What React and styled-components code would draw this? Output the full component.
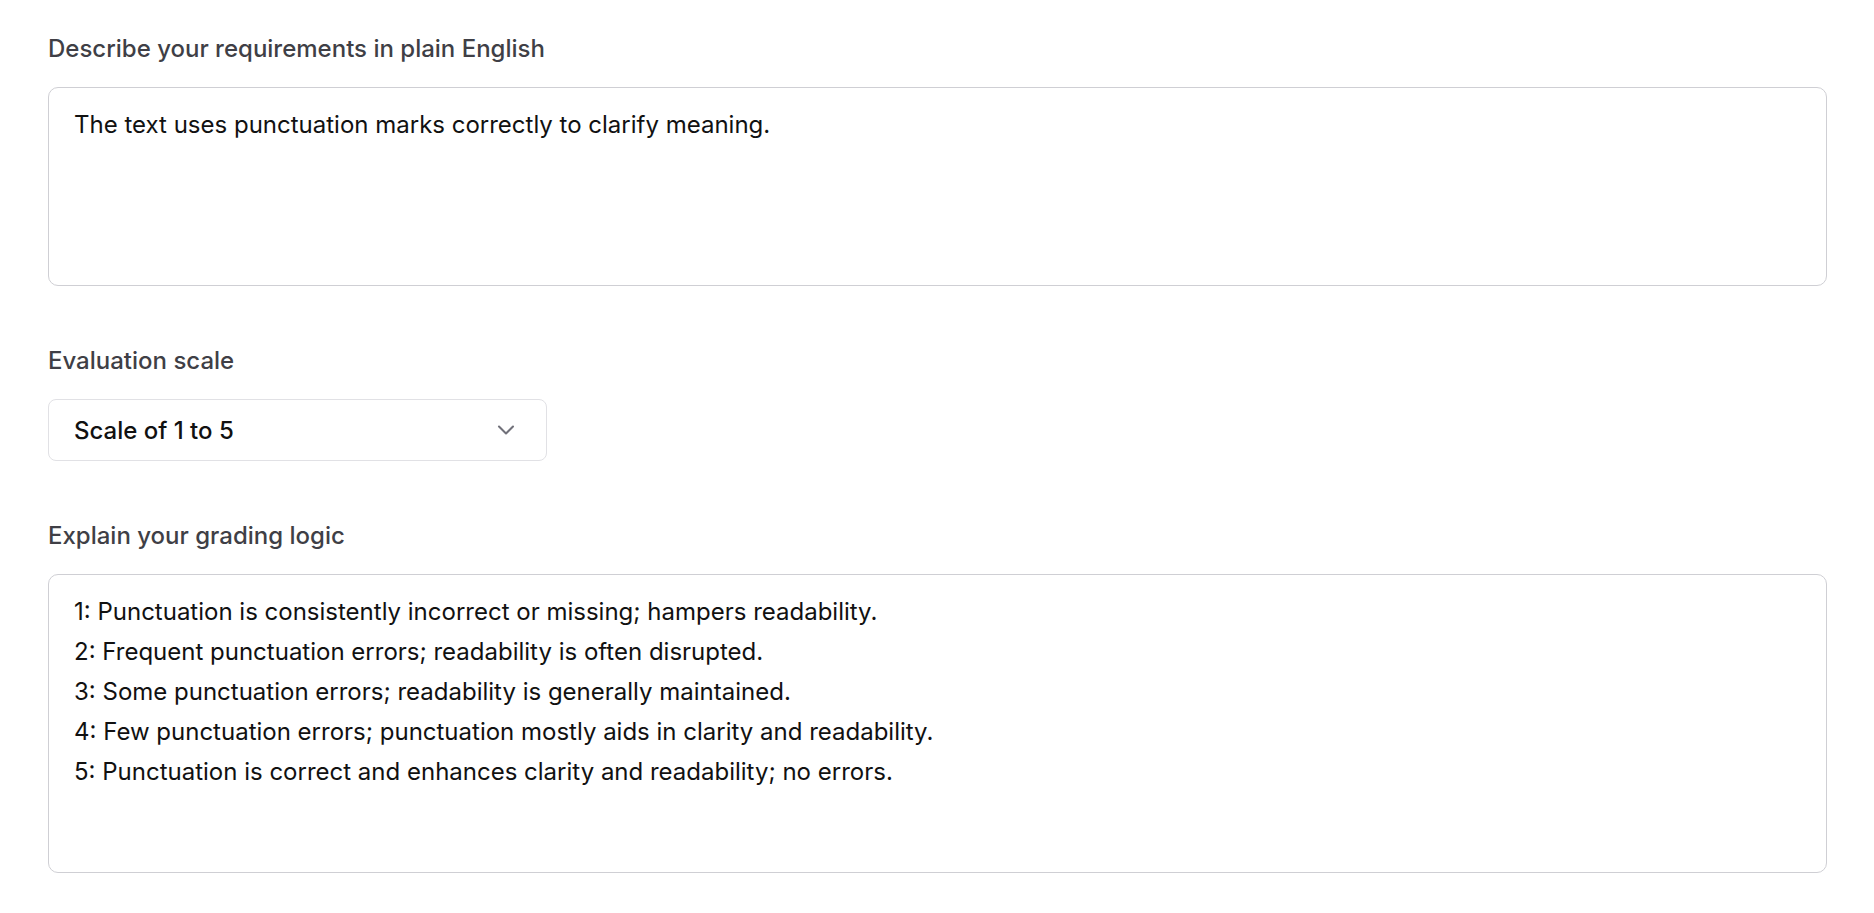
import styled, { createGlobalStyle } from "styled-components";
import { ChevronDown } from "lucide-react";

const GlobalStyle = createGlobalStyle`
  * { box-sizing: border-box; }
  body {
    margin: 0;
    background: #ffffff;
    font-family: Inter, "Noto Sans", sans-serif;
    -webkit-font-smoothing: antialiased;
  }
`;

const Page = styled.div`
  display: flex;
  flex-direction: column;
  gap: 59px;
  padding: 33px 47px 40px 48px;
`;

const Field = styled.div`
  display: flex;
  flex-direction: column;
  gap: 22px;
`;

const Label = styled.label`
  color: #3f3f46;
  font-size: 24px;
  font-weight: 500;
  line-height: 32px;
`;

const TextArea = styled.textarea`
  width: 100%;
  height: ${({ $rows }) => $rows}px;
  padding: 17px 25px 16px;
  border: 1px solid #cfcfd4;
  border-radius: 10px;
  background: #ffffff;
  color: #111111;
  font-family: Inter, "Noto Sans", sans-serif;
  font-size: 24px;
  line-height: 40px;
  resize: none;
  outline: none;
`;

const Select = styled.button`
  display: flex;
  align-items: center;
  justify-content: space-between;
  width: 499px;
  height: 62px;
  padding: 0 26px 0 25px;
  border: 1px solid #e1e1e5;
  border-radius: 8px;
  background: #ffffff;
  color: #111111;
  font-family: Inter, "Noto Sans", sans-serif;
  font-size: 24px;
  font-weight: 500;
  cursor: pointer;
`;

const Chevron = styled(ChevronDown)`
  color: #71717a;
  flex-shrink: 0;
`;

const requirements = "The text uses punctuation marks correctly to clarify meaning.";

const grading = [
  "1: Punctuation is consistently incorrect or missing; hampers readability.",
  "2: Frequent punctuation errors; readability is often disrupted.",
  "3: Some punctuation errors; readability is generally maintained.",
  "4: Few punctuation errors; punctuation mostly aids in clarity and readability.",
  "5: Punctuation is correct and enhances clarity and readability; no errors.",
].join("\n");

export default function App() {
  return (
    <>
      <GlobalStyle />
      <Page>
        <Field>
          <Label>Describe your requirements in plain English</Label>
          <TextArea $rows={199} defaultValue={requirements} />
        </Field>

        <Field>
          <Label>Evaluation scale</Label>
          <Select type="button">
            Scale of 1 to 5
            <Chevron size={28} strokeWidth={1.75} />
          </Select>
        </Field>

        <Field>
          <Label>Explain your grading logic</Label>
          <TextArea $rows={299} defaultValue={grading} />
        </Field>
      </Page>
    </>
  );
}
